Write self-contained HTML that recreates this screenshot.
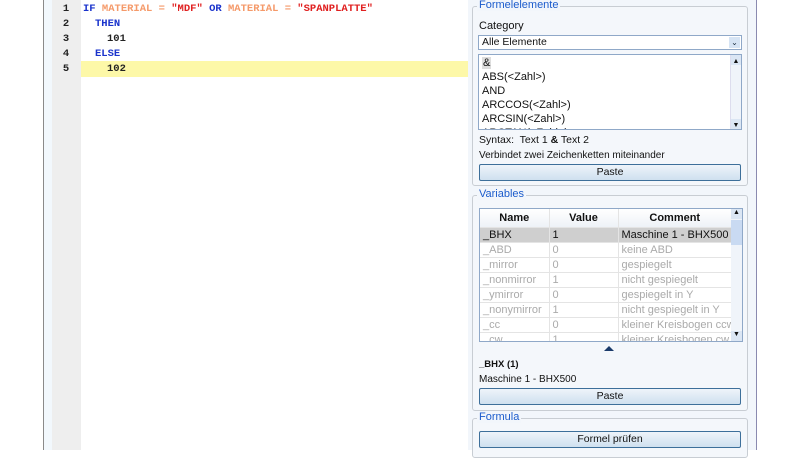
<!DOCTYPE html>
<html><head><meta charset="utf-8"><style>
*{margin:0;padding:0;box-sizing:border-box}
body{width:800px;height:450px;overflow:hidden;background:#fff;font-family:"Liberation Sans",sans-serif;font-size:11px;color:#111;position:relative}
.a{position:absolute}
.code{font-family:"Liberation Mono",monospace;font-weight:bold;font-size:10.5px;white-space:pre}
.ln{position:absolute;left:52px;width:28px;text-align:center;font-family:"Liberation Mono",monospace;font-weight:bold;font-size:10.5px;color:#222}
.fs{position:absolute;left:472px;width:276px;border:1px solid #c8cdd3;border-radius:3px;background:#f4f7fb}
.lg{position:absolute;top:-8px;left:4px;background:#f2f6fb;color:#1c5ccc;padding:0 2px;font-size:11px}
.btn{position:absolute;left:6px;width:262px;height:17px;border:1px solid #3d6f9a;background:linear-gradient(#eef4fa,#cfe0ef);text-align:center;font-size:10.5px;line-height:15px;border-radius:2px}
table{border-collapse:collapse;font-size:11px}
td{height:15px;padding:0 3px;border-bottom:1px solid #e4e4e4;border-right:1px solid #e4e4e4;color:#aaa;white-space:nowrap;overflow:hidden}
</style></head><body>
<div class="a" style="left:43px;top:0;width:1px;height:450px;background:#8a8a8a"></div>
<div class="a" style="left:44px;top:0;width:8px;height:450px;background:#f2f8fd"></div>
<div class="a" style="left:52px;top:0;width:29px;height:450px;background:#eeeeee"></div>
<div class="a" style="left:81px;top:61px;width:387px;height:16px;background:#fdf8a8"></div>
<div class="ln" style="top:3px">1</div><div class="ln" style="top:18px">2</div><div class="ln" style="top:33px">3</div><div class="ln" style="top:48px">4</div><div class="ln" style="top:63px">5</div>
<div class="a code" style="left:83px;top:3px"><span style="color:#1a33cc">IF</span> <span style="color:#f59a6a">MATERIAL = </span><span style="color:#e02020">"MDF"</span> <span style="color:#1a33cc">OR</span> <span style="color:#f59a6a">MATERIAL = </span><span style="color:#e02020">"SPANPLATTE"</span></div>
<div class="a code" style="left:95px;top:18px;color:#1a33cc">THEN</div>
<div class="a code" style="left:107px;top:33px;color:#222">101</div>
<div class="a code" style="left:95px;top:48px;color:#1a33cc">ELSE</div>
<div class="a code" style="left:107px;top:63px;color:#222">102</div>

<div class="a" style="left:468px;top:0;width:288px;height:450px;background:#f2f6fb"></div>
<div class="a" style="left:756px;top:0;width:1px;height:450px;background:#8a8ab0"></div>

<div class="fs" style="top:6px;height:180px">
<div class="lg">Formelelemente</div>
<div class="a" style="left:6px;top:13px">Category</div>
<div class="a" style="left:5px;top:28px;width:264px;height:15px;border:1px solid #8fa8c8;background:#fff;padding-left:3px;font-size:10.5px;line-height:13px">Alle Elemente<div class="a" style="right:1px;top:1px;width:11px;height:11px;background:#d6e4f4;font-size:8px;line-height:11px;text-align:center;color:#234">&#8964;</div></div>
<div class="a" style="left:5px;top:47px;width:264px;height:76px;border:1px solid #8fa8c8;background:#fff;overflow:hidden;font-size:11px;line-height:14px;padding:1px 3px">
<span style="background:#ddd;padding:0 1px">&amp;</span><br>ABS(&lt;Zahl&gt;)<br>AND<br>ARCCOS(&lt;Zahl&gt;)<br>ARCSIN(&lt;Zahl&gt;)<br>ARCTAN(&lt;Zahl&gt;)
<div class="a" style="right:0;top:0;width:11px;height:74px;background:#f0f4fa;border-left:1px solid #dde"><div style="height:10px;background:#dbe6f4;font-size:7px;text-align:center">&#9650;</div><div style="position:absolute;bottom:0;width:10px;height:10px;background:#dbe6f4;font-size:7px;text-align:center">&#9660;</div></div></div>
<div class="a" style="left:6px;top:127px;font-size:10.5px">Syntax:&nbsp; Text 1 <b>&amp;</b> Text 2</div>
<div class="a" style="left:6px;top:143px;font-size:10px">Verbindet zwei Zeichenketten miteinander</div>
<div class="btn" style="top:157px">Paste</div>
</div>

<div class="fs" style="top:195px;height:216px">
<div class="lg">Variables</div>
<div class="a" style="left:6px;top:12px;width:264px;height:134px;border:1px solid #8fa8c8;background:#fff;overflow:hidden">
<table style="width:252px;table-layout:fixed">
<colgroup><col style="width:69px"><col style="width:69px"><col></colgroup>
<tr><td style="color:#111;font-weight:bold;text-align:center;height:18px;background:linear-gradient(#fff,#eef2f7)">Name</td><td style="color:#111;font-weight:bold;text-align:center;background:linear-gradient(#fff,#eef2f7)">Value</td><td style="color:#111;font-weight:bold;text-align:center;background:linear-gradient(#fff,#eef2f7)">Comment</td></tr>
<tr style="background:#cfcfcf"><td style="color:#111">_BHX</td><td style="color:#111">1</td><td style="color:#111">Maschine 1 - BHX500</td></tr>
<tr><td>_ABD</td><td>0</td><td>keine ABD</td></tr>
<tr><td>_mirror</td><td>0</td><td>gespiegelt</td></tr>
<tr><td>_nonmirror</td><td>1</td><td>nicht gespiegelt</td></tr>
<tr><td>_ymirror</td><td>0</td><td>gespiegelt in Y</td></tr>
<tr><td>_nonymirror</td><td>1</td><td>nicht gespiegelt in Y</td></tr>
<tr><td>_cc</td><td>0</td><td>kleiner Kreisbogen ccw</td></tr>
<tr><td>_cw</td><td>1</td><td>kleiner Kreisbogen cw</td></tr>
</table>
<div class="a" style="right:0;top:0;width:11px;height:132px;background:#f0f4fa"><div style="height:10px;background:#dbe6f4;font-size:7px;text-align:center">&#9650;</div><div style="margin-top:1px;height:25px;background:#c9daf2"></div><div style="position:absolute;bottom:0;width:11px;height:10px;background:#dbe6f4;font-size:7px;text-align:center">&#9660;</div></div>
</div>
<div class="a" style="left:131px;top:150px;width:0;height:0;border-left:5px solid transparent;border-right:5px solid transparent;border-bottom:5px solid #1a3a6a"></div>
<div class="a" style="left:6px;top:163px;font-size:9.5px;font-weight:bold">_BHX (1)</div>
<div class="a" style="left:6px;top:178px;font-size:10px">Maschine 1 - BHX500</div>
<div class="btn" style="top:192px">Paste</div>
</div>

<div class="fs" style="top:418px;height:40px">
<div class="lg">Formula</div>
<div class="btn" style="top:12px">Formel prüfen</div>
</div>
</body></html>
